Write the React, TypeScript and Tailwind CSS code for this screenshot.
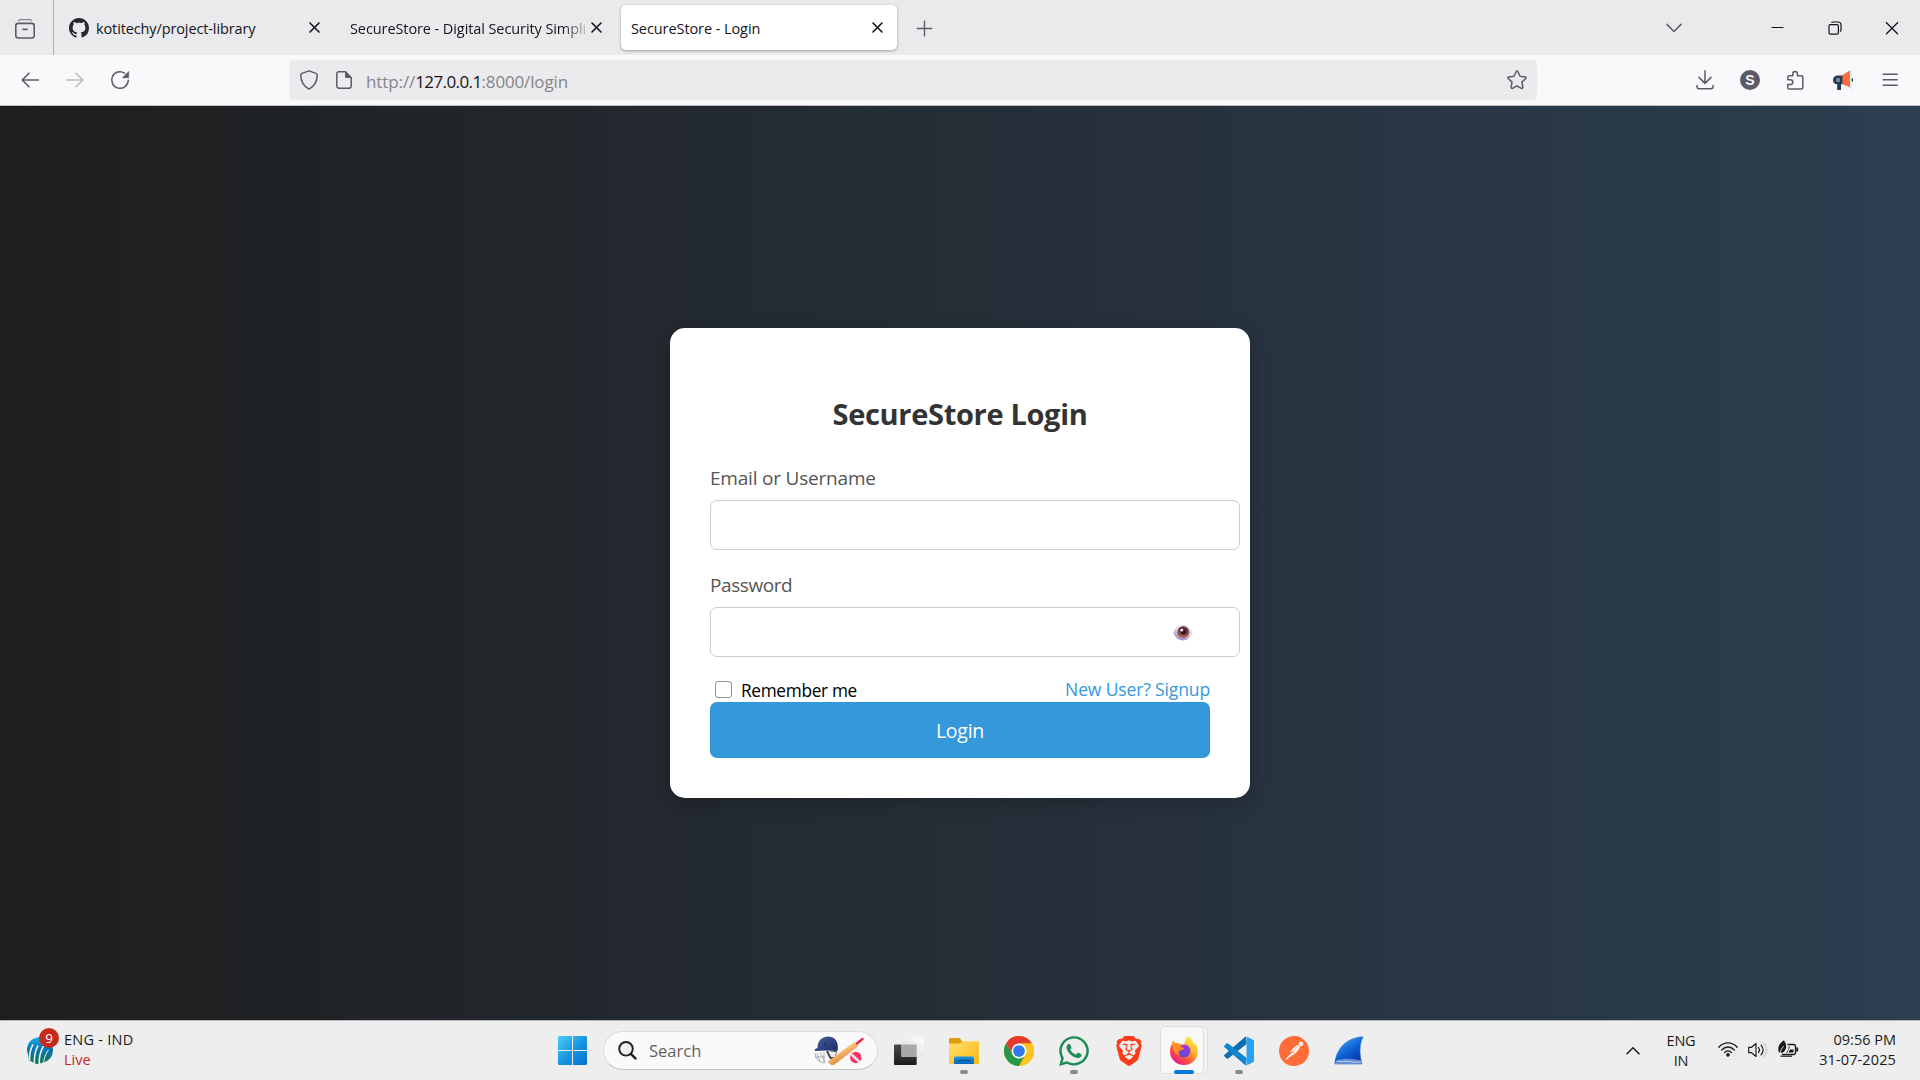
import React, { useState } from "react";
import { FaWhatsapp } from "react-icons/fa";
import { SiBrave, SiPostman } from "react-icons/si";

type LineProps = {
  d: string;
  className?: string;
  size?: number;
  width?: number;
};

/** Stroked glyph on a 20-unit grid, used by the browser toolbar. */
function Line({ d, className = "text-[#5b5b66]", size = 20, width = 1.5 }: LineProps) {
  return (
    <svg
      width={size}
      height={size}
      viewBox="0 0 20 20"
      fill="none"
      stroke="currentColor"
      strokeWidth={width}
      strokeLinecap="round"
      strokeLinejoin="round"
      className={`block shrink-0 ${className}`}
    >
      <path d={d} />
    </svg>
  );
}

function CloseIcon() {
  return <Line d="M5 5l9 9M14 5l-9 9" className="text-[#15141a]" width={1.6} />;
}

function GithubMark() {
  return (
    <svg width="20" height="20" viewBox="0 0 16 16" fill="#24292f" className="block shrink-0">
      <path d="M8 0C3.58 0 0 3.58 0 8c0 3.54 2.29 6.53 5.47 7.59.4.07.55-.17.55-.38 0-.19-.01-.82-.01-1.49-2.01.37-2.53-.49-2.69-.94-.09-.23-.48-.94-.82-1.13-.28-.15-.68-.52-.01-.53.63-.01 1.08.58 1.23.82.72 1.21 1.87.87 2.33.66.07-.52.28-.87.51-1.07-1.78-.2-3.64-.89-3.64-3.95 0-.87.31-1.59.82-2.15-.08-.2-.36-1.02.08-2.12 0 0 .67-.21 2.2.82.64-.18 1.32-.27 2-.27s1.36.09 2 .27c1.53-1.04 2.2-.82 2.2-.82.44 1.1.16 1.92.08 2.12.51.56.82 1.27.82 2.15 0 3.07-1.87 3.75-3.65 3.95.29.25.54.73.54 1.48 0 1.07-.01 1.93-.01 2.2 0 .21.15.46.55.38A8.01 8.01 0 0 0 16 8c0-4.42-3.58-8-8-8z" />
    </svg>
  );
}

function TabStrip() {
  return (
    <div className="flex h-[55px] shrink-0 items-start bg-[#eaeaec] text-[14.5px] text-[#15141a]">
      <div className="flex h-[55px] w-[54px] items-center border-r border-[#adadb2] pl-[15px]">
        <svg width="20" height="20" viewBox="0 0 20 20" fill="none" stroke="#5b5b66" className="mt-[2px] block">
          <path d="M3.4 1.6c.4-.6 1-.9 1.8-.9h9.600c.8 0 1.4.3 1.8.9" strokeWidth="1.2" strokeLinecap="round" stroke="#85858e" />
          <rect x=".8" y="4.4" width="18.4" height="14.6" rx="2.4" strokeWidth="1.6" />
          <path d="M8 10.4h4" strokeWidth="1.6" strokeLinecap="round" />
        </svg>
      </div>
      <div className="flex h-[56px] w-[276px] items-center pl-[15px] pr-[5px]">
        <GithubMark />
        <span className="ml-[7px] mt-[2px] grow whitespace-nowrap tracking-[-0.12px]">kotitechy/project-library</span>
        <CloseIcon />
      </div>
      <div className="flex h-[56px] w-[291px] items-center pl-[20px] pr-[14px]">
        <span className="mt-[2px] w-[237px] shrink-0 whitespace-nowrap tracking-[-0.09px] [mask-image:linear-gradient(to_right,black_212px,transparent_242px)]">
          SecureStore - Digital Security Simpli
        </span>
        <CloseIcon />
      </div>
      <div className="mt-[5px] flex h-[45px] w-[276px] items-center rounded-[5px] bg-white pl-[10px] pr-[9px] shadow-[0_1px_3px_rgba(0,0,0,0.32)]">
        <span className="mt-[2px] grow whitespace-nowrap tracking-[-0.08px]">SecureStore - Login</span>
        <CloseIcon />
      </div>
      <Line d="M10.500 3.300v14.400M3.300 10.500h14.400" className="ml-[17px] mt-[18px] text-[#5b5b66]" width={1.4} />
      <div className="ml-auto flex h-[55px] items-center">
        <Line d="M2.900 6.400l7.100 7.100 7.100-7.100" className="mr-[84px] text-[#5b5b66]" width={1.5} />
        <svg width="20" height="20" viewBox="0 0 20 20" className="mr-[37px] block">
          <path d="M3.500 9.500h12" stroke="#15141a" />
        </svg>
        <svg width="20" height="20" viewBox="0 0 20 20" fill="none" stroke="#15141a" strokeWidth="1.2" className="mr-[37px] block">
          <rect x="4" y="6.600" width="9.400" height="9.600" rx="1.400" />
          <path d="M6.400 4.600c.4-.6.9-.6 1.600-.6h5c1.900 0 3 1 3 3v4.600c0 .8-.1 1.500-.9 2" />
        </svg>
        <svg width="20" height="20" viewBox="0 0 20 20" stroke="#15141a" strokeWidth="1.25" className="mr-[18px] block">
          <path d="M4 4.300l12 12M16 4.300l-12 12" />
        </svg>
      </div>
    </div>
  );
}

function Megaphone() {
  return (
    <svg width="20" height="20" viewBox="0 0 20 20" className="block">
      <path d="M9 5.300L17 .5v17L9 14z" fill="#ff6f3c" />
      <path d="M0 10a4.600 4.600 0 0 1 4.600-4.500H9.400v8.800H8V20H4.200v-5.700A4.500 4.500 0 0 1 0 10z" fill="#1f3b57" />
      <path d="M3.300 8h3.500v4H3.300z" fill="#7d8b99" />
      <path d="M17 0h1.800v20H17z" fill="#d4effb" />
      <path d="M18.700 8.200a1.700 1.700 0 0 1 0 3.600z" fill="#1f3b57" />
    </svg>
  );
}

function NavBar() {
  return (
    <div className="flex h-[51px] shrink-0 items-center border-b border-[#bfbfc3] bg-[#f9f9fb]">
      <Line d="M18.200 10H2.200M9 3.200L2.200 10 9 16.800" className="ml-5 text-[#5b5b66]" size={20} width={1.600} />
      <Line d="M1.800 10h16M11 3.200l6.800 6.800-6.800 6.800" className="ml-[25px] text-[#bcbcc1]" size={20} width={1.600} />
      <svg width="20" height="20" viewBox="0 0 20 20" fill="none" className="ml-[25px] block">
        <path d="M18.300 10.300A8.300 8.300 0 1 1 14.600 3.100" stroke="#5b5b66" strokeWidth="1.500" strokeLinecap="round" />
        <path d="M18.700 1.500v6.300h-6.300z" fill="#5b5b66" stroke="#5b5b66" strokeWidth=".6" strokeLinejoin="round" />
      </svg>
      <div className="ml-[159px] flex h-10 w-[1248px] items-center rounded-[5px] bg-[#ebebed] pl-[10px] pr-[10px]">
        <Line
          d="M10 .9l7 2.500c.7.300 1.200.8 1.200 1.700 0 6.500-1.900 10.800-8.200 14-6.300-3.200-8.200-7.500-8.200-14 0-.9.500-1.400 1.200-1.700z"
          width={1.5}
        />
        <svg width="16" height="18" viewBox="0 0 16 18" fill="none" className="ml-[17px] block">
          <path d="M9.500.8H3A2.200 2.200 0 0 0 .8 3v12A2.200 2.200 0 0 0 3 17.200h10a2.200 2.200 0 0 0 2.200-2.200V6.500z" stroke="#5b5b66" strokeWidth="1.500" strokeLinejoin="round" />
          <path d="M9 .5l6.500 6.500H10.500A1.500 1.500 0 0 1 9 5.500z" fill="#5b5b66" />
        </svg>
        <div className="ml-[14px] mt-[3px] grow whitespace-nowrap text-[17px] text-[#858589]">
          <span className="tracking-[-0.1px]">http://</span>
          <span className="tracking-[-0.6px] text-[#15141a]">127.0.0.1</span>
          <span className="tracking-[-0.15px]">:8000/login</span>
        </div>
        <Line
          d="M9.200 1.500c.3-.7 1.300-.7 1.600 0l2.200 4.700 5.200.7c.8.100 1.100 1 .5 1.600l-3.800 3.600.9 5.200c.2.800-.7 1.400-1.400 1L10 15.800l-4.500 2.500c-.7.400-1.500-.2-1.400-1l.9-5.200L1.200 8.500c-.6-.6-.3-1.500.5-1.600L7 6.200z"
          width={1.5}
        />
      </div>
      <div className="ml-auto flex items-center pr-5">
        <Line d="M10 .8v12.400M4 7.400l6 6 6-6M2 15.600v1.200A1.900 1.900 0 0 0 3.900 18.700h12.200a1.900 1.900 0 0 0 1.900-1.900v-1.200" />
        <div className="ml-[25px] flex size-5 items-center justify-center rounded-full bg-[#5b5b66] font-['Liberation_Sans'] text-[14px] font-bold leading-5 text-[#f9f9fb]">
          S
        </div>
        <Line
          className="ml-[25px] text-[#5b5b66]"
          d="M2.800 9.700V7.200c0-.9.600-1.500 1.500-1.500h3.500V3.800a2.300 2.300 0 0 1 4.600 0v1.900h3.900c.9 0 1.500.6 1.500 1.500v10.300c0 .9-.6 1.500-1.500 1.500H4.300c-.9 0-1.500-.6-1.500-1.500V14.600h2.600a2.400 2.400 0 0 0 0-4.900z"
        />
        <div className="ml-[28px]">
          <Megaphone />
        </div>
        <svg width="20" height="20" viewBox="0 0 20 20" stroke="#5b5b66" strokeWidth="1.500" strokeLinecap="round" className="ml-[27px] block">
          <path d="M3.200 4.200h14M3.200 9.700h14M3.200 15.200h14" />
        </svg>
      </div>
    </div>
  );
}

function EyeIcon() {
  return (
    <svg width="20" height="18" viewBox="0 0 20 18" className="block">
      <defs>
        <linearGradient id="eye-white" x1=".75" y1="0" x2=".25" y2="1">
          <stop offset="0" stopColor="#ececee" />
          <stop offset=".5" stopColor="#d9d4df" />
          <stop offset="1" stopColor="#957cc4" />
        </linearGradient>
        <linearGradient id="eye-iris" x1=".5" y1="0" x2=".5" y2="1">
          <stop offset="0" stopColor="#5e2138" />
          <stop offset="1" stopColor="#b3674f" />
        </linearGradient>
      </defs>
      <path d="M.2 8.600C2 3.300 6 .8 10 .8s8 2.500 9.800 7.800c-2 5.300-5.800 8-9.800 8s-8-2.700-9.800-8z" fill="url(#eye-white)" />
      <circle cx="10.300" cy="8.200" r="5.900" fill="url(#eye-iris)" />
      <circle cx="10.500" cy="8" r="2.800" fill="#30151f" />
      <circle cx="8.800" cy="6.200" r="1.400" fill="#fff" />
    </svg>
  );
}

function LoginCard() {
  const [visible, setVisible] = useState(false);
  return (
    <div className="h-[470px] w-[580px] rounded-[15px] bg-white px-10 pt-[66px] shadow-[0_5px_19px_rgba(0,0,0,0.2)]">
      <h2 className="text-center text-[29px] font-bold leading-10 tracking-[-0.32px] text-[#333]">SecureStore Login</h2>
      <label htmlFor="user" className="mt-8 block text-[19px] leading-6 tracking-[-0.2px] text-[#555]">
        Email or Username
      </label>
      <input id="user" className="mt-[10px] block h-[50px] w-[530px] rounded-[7px] border border-[#ccc] px-4 outline-none" />
      <label htmlFor="pass" className="mt-[23px] block text-[19px] leading-6 tracking-[-0.42px] text-[#555]">
        Password
      </label>
      <div className="relative mt-[10px] w-[530px]">
        <input
          id="pass"
          type={visible ? "text" : "password"}
          className="block h-[50px] w-full rounded-[7px] border border-[#ccc] px-4 outline-none"
        />
        <button
          type="button"
          aria-label="Toggle password"
          onClick={() => setVisible(!visible)}
          className="absolute right-[47px] top-[17px]"
        >
          <EyeIcon />
        </button>
      </div>
      <div className="mt-[21px] flex h-6 items-center justify-between">
        <label className="flex items-start">
          <input
            type="checkbox"
            className="ml-[5px] mt-[3px] size-[17px] appearance-none rounded-[3px] border border-[#8f8f9d] bg-white"
          />
          <span className="ml-[9px] mt-[1px] text-[17.25px] leading-6 tracking-[-0.31px] text-black">Remember me</span>
        </label>
        <a className="-mt-[2px] text-[17.5px] leading-6 tracking-[-0.13px] text-[#3498db]">New User? Signup</a>
      </div>
      <button type="button" className="flex h-14 w-full items-center justify-center rounded-[7px] bg-[#3498db] pt-[2px] text-[19.5px] tracking-[-0.25px] text-white">
        Login
      </button>
    </div>
  );
}

function CricketWidget() {
  return (
    <div className="flex w-[160px] items-center">
      <div className="relative ml-[26px] mt-[-1px]">
        <svg width="28" height="30" viewBox="0 0 28 30" className="block">
          <defs>
            <linearGradient id="icc" x1="0" y1="0" x2="0" y2="1">
              <stop offset="0" stopColor="#16b3e6" />
              <stop offset=".45" stopColor="#0873b4" />
              <stop offset="1" stopColor="#0f7a45" />
            </linearGradient>
          </defs>
          <path
            d="M1 15C1 7 7 2 15 2c7 0 12 5 12 13 0 6-4 11-8.500 12l-2 .5-4.500 1.800-4-1.300L3 25z"
            fill="url(#icc)"
          />
          <path d="M7 9.500C4.500 14 3.300 19 3.600 25M12 10.500C9 16 8.200 21 8.300 28M17.500 11C14 17 13 22 13.200 29" fill="none" stroke="#ededed" strokeWidth="1.600" />
          <path d="M22.500 15c-3 4-4.500 8-4.800 12.500" fill="none" stroke="#ededed" />
          <path d="M-1 21l4 6 2 3h-6z" fill="#ededed" />
        </svg>
        <span className="absolute left-[13px] top-[-7px] flex size-5 items-center justify-center rounded-full bg-[#c42b1c] text-[13.5px] leading-5 text-white">
          9
        </span>
      </div>
      <div className="-mt-[2px] ml-[10px] text-[14.5px] leading-5 text-[#1b1b1b]">
        <div className="whitespace-nowrap tracking-[0.25px]">ENG - IND</div>
        <div className="text-[#c42b1c]">Live</div>
      </div>
    </div>
  );
}

function WindowsLogo() {
  return (
    <svg width="29" height="29" viewBox="0 0 29 29" className="block">
      <defs>
        <linearGradient id="win" gradientUnits="userSpaceOnUse" x1="0" y1="0" x2="29" y2="29">
          <stop offset="0" stopColor="#4cd0fb" />
          <stop offset=".5" stopColor="#1796e2" />
          <stop offset="1" stopColor="#0670cd" />
        </linearGradient>
      </defs>
      <path d="M1 0h13v14H0V1zM15 0h13l1 1v13H15zM0 15h14v14H1l-1-1zM15 15h14v13l-1 1H15z" fill="url(#win)" />
    </svg>
  );
}

function CricketArt() {
  return (
    <svg width="50" height="30" viewBox="0 0 50 30" className="block">
      <defs>
        <linearGradient id="helmet" x1="0" y1="0" x2="1" y2="1">
          <stop offset="0" stopColor="#48619f" />
          <stop offset="1" stopColor="#1b2c68" />
        </linearGradient>
        <linearGradient id="bat" gradientUnits="userSpaceOnUse" x1="26" y1="12" x2="31" y2="22">
          <stop offset="0" stopColor="#ffd08c" />
          <stop offset="1" stopColor="#e59343" />
        </linearGradient>
      </defs>
      <path d="M1 17c0 5 3 9 10 10M1 21h10M3 17l3 9M6 16l5 10M10 16v11M13 16l2 5 5 1 3-6M14 27l4-5" fill="none" stroke="#a9adb2" strokeWidth="1" />
      <path d="M12 15l4 8 5-1 2-8z" fill="#3a3d49" />
      <path d="M14 15l3 6h4l1-5z" fill="#eee" />
      <path d="M3.500 12C3.500 4 9 .5 14 .5c6 0 9.800 4 9.800 10v4H13l-12 .5c-.800-1 .200-2.500 2.500-3z" fill="url(#helmet)" />
      <path d="M11.500 6c-.600 1.500-.300 3 .3 4" fill="none" stroke="#13204e" />
      <path d="M38.500 7.500l2.500-1.700 3.500 4L42 12 20.500 28.500c-2 1.300-4 .200-5.500-1.500-.800-1-.700-1.800 0-2.400z" fill="url(#bat)" />
      <path d="M43 7.500l5.500-4.500" stroke="#e12a4a" strokeWidth="2.400" strokeLinecap="round" />
      <circle cx="41.800" cy="21.500" r="5.700" fill="#f2355f" />
      <path d="M37.500 18.500l8 7.500" stroke="#f7d9f0" strokeWidth="2.600" />
    </svg>
  );
}

function TaskViewIcon() {
  return (
    <svg width="30" height="28" viewBox="0 0 30 28" className="block">
      <defs>
        <linearGradient id="tv-dark" x1="0" y1="0" x2="0" y2="1">
          <stop offset="0" stopColor="#4b4b4b" />
          <stop offset="1" stopColor="#1d1d1d" />
        </linearGradient>
        <linearGradient id="tv-light" x1="1" y1="0" x2="0" y2="1">
          <stop offset="0" stopColor="#fdfdfd" />
          <stop offset="1" stopColor="#dadada" />
        </linearGradient>
      </defs>
      <rect x="0" y="7.500" width="22.700" height="20.500" rx="1" fill="url(#tv-dark)" />
      <rect x="7.500" y="0" width="22.300" height="20" rx="1" fill="url(#tv-light)" />
      <rect x="7.500" y="7.500" width="15.200" height="12.500" fill="#a9a9a9" />
    </svg>
  );
}

function ExplorerIcon() {
  return (
    <svg width="30" height="26" viewBox="0 0 30 26" className="block">
      <defs>
        <linearGradient id="folder" x1="0" y1="0" x2="1" y2="1">
          <stop offset="0" stopColor="#ffdf70" />
          <stop offset="1" stopColor="#fbb813" />
        </linearGradient>
        <linearGradient id="folder-base" x1="0" y1="0" x2="0" y2="1">
          <stop offset="0" stopColor="#1a97dd" />
          <stop offset="1" stopColor="#0666b8" />
        </linearGradient>
      </defs>
      <path d="M0 1.500C0 .6.600 0 1.500 0h8c.7 0 1.200.200 1.700.800L13.500 4v5H0z" fill="#dc9c08" />
      <path d="M0 5.500h10.500L14 3.200h15c.6 0 1 .4 1 1V26H0z" fill="url(#folder)" />
      <path d="M5 26v-5.500c0-1.200.8-2 2-2h16c1.200 0 2 .8 2 2V26z" fill="url(#folder-base)" />
      <path d="M8.500 22.500h13" stroke="#0a4f93" strokeWidth="1.200" />
    </svg>
  );
}

function ChromeIcon() {
  return (
    <svg width="30" height="30" viewBox="0 0 48 48" className="block">
      <circle cx="24" cy="24" r="24" fill="#fbc116" />
      <path d="M24 0a24 24 0 0 1 20.800 12H24L13.600 30 3.200 12A24 24 0 0 1 24 0z" fill="#e33b2e" />
      <path d="M3.200 12l10.400 18L24 36l10.400-6L24 48A24 24 0 0 1 3.200 12z" fill="#279847" />
      <path d="M24 12h20.800A24 24 0 0 1 24 48l10.400-18z" fill="#fcc31e" />
      <circle cx="24" cy="24" r="12" fill="#fff" />
      <circle cx="24" cy="24" r="9.400" fill="#3478ee" />
    </svg>
  );
}

function FirefoxIcon() {
  return (
    <svg width="28" height="30" viewBox="0 0 28 30" className="block">
      <defs>
        <linearGradient id="fx-body" x1=".85" y1=".1" x2=".2" y2=".95">
          <stop offset="0" stopColor="#fff14d" />
          <stop offset=".35" stopColor="#ffb02c" />
          <stop offset=".65" stopColor="#ff5b36" />
          <stop offset="1" stopColor="#e8128c" />
        </linearGradient>
        <linearGradient id="fx-globe" x1=".7" y1="0" x2=".3" y2="1">
          <stop offset="0" stopColor="#a233e0" />
          <stop offset="1" stopColor="#5a4fd8" />
        </linearGradient>
        <linearGradient id="fx-fox" x1="0" y1="0" x2="1" y2="1">
          <stop offset="0" stopColor="#ffa22b" />
          <stop offset="1" stopColor="#ff7a1c" />
        </linearGradient>
      </defs>
      <path
        d="M18.500 0c2.200 1.800 4 4.300 4.600 6.300.9.400 1.600 1 2 1.600l.3-1C27 9.500 28 12.500 28 15.500 28 23 21.800 29 14 29S0 23 0 15.500c0-3.300.8-6 2.300-8l.7-2.800L5.300 7.300 9 7.500 14 10c.3-4 1.600-7.500 4.500-10z"
        fill="url(#fx-body)"
      />
      <circle cx="14" cy="15" r="6.400" fill="url(#fx-globe)" />
      <path
        d="M2.300 7.500L3 4.700l2.500 2.700c1.500-.3 3-.1 4.300.7l2.900.2c-.7 1.500-1.700 2.400-2.500 2.800l3.500.6c.6.200.5 1-.1 1.500-1.300 1-2.300 1.100-3.600 1.200-1.700.8-2 3-.5 5C6 19 3.500 16 2.300 7.500z"
        fill="url(#fx-fox)"
      />
    </svg>
  );
}

function VscodeIcon() {
  return (
    <svg width="30" height="30" viewBox="0 0 30 30" className="block">
      <path d="M21.800.2L22.600 8 4.200 22.400c-.5.400-1.100.4-1.600 0L.5 20.500c-.6-.5-.6-1.300 0-1.800z" fill="#0a6fb5" />
      <path d="M21.800 29.800L22.600 22 4.200 7.600c-.5-.4-1.100-.4-1.600 0L.5 9.500c-.6.5-.6 1.300 0 1.800z" fill="#1086cf" />
      <path d="M21.800 29.800c-.5.100-1 0-1.300-.4.700.7 2 .2 2-.9V1.500c0-1.100-1.300-1.600-2-.9.300-.4.800-.5 1.300-.4L29 3.700c.6.300 1 .9 1 1.500v19.600c0 .6-.4 1.200-1 1.500z" fill="#26a3f0" />
    </svg>
  );
}

function WiresharkIcon() {
  return (
    <svg width="30" height="29" viewBox="0 0 30 29" className="block">
      <defs>
        <linearGradient id="fin" x1=".2" y1=".1" x2=".8" y2="1">
          <stop offset="0" stopColor="#3f9bf5" />
          <stop offset=".5" stopColor="#0b5fd6" />
          <stop offset="1" stopColor="#072f98" />
        </linearGradient>
      </defs>
      <path d="M.8 28C2 14 11 2 29 .8 25.500 8 25 17 28 28z" fill="url(#fin)" stroke="#2b6fce" strokeWidth=".6" />
      <path d="M2 24.500c7-2.300 17-2.300 25 0l1 3.500H.8z" fill="#7fa6dd" opacity=".75" />
      <path d="M3 25c5 1.500 8-.5 12 .5s8 .5 12 .5" stroke="#d5e3f5" fill="none" strokeWidth=".8" />
    </svg>
  );
}

function BatteryIcon() {
  return (
    <svg width="21" height="18" viewBox="0 0 21 18" className="block">
      <path d="M9.500 4.500h6c1.100 0 2 .9 2 2v6c0 1.100-.9 2-2 2H4" fill="none" stroke="#1b1b1b" strokeWidth="1.300" />
      <path d="M8 12.600c2-1.600 2.800-3.600 2.600-6.100H12L9.500 12.600zM10.500 12.600L12 9.500h3.500v3.100z" fill="#1b1b1b" />
      <path d="M.8 12.500C-.6 7.500 1 3.500 5.800.3c2.600 3.200 3.600 7.200.6 10.900-1.100 1.300-2.700 1.800-4 1.300z" fill="#1b1b1b" />
      <path d="M1.300 15.500C2 11.500 3.500 8.500 5.600 6" fill="none" stroke="#eee" strokeWidth=".9" />
      <path d="M2.500 16.200H14" stroke="#1b1b1b" strokeWidth="1.200" />
      <path d="M18.300 7.300h.5c.8 0 1.300.6 1.300 1.300v1.800c0 .7-.5 1.300-1.300 1.300h-.5z" fill="#1b1b1b" />
    </svg>
  );
}

type SlotProps = { children: React.ReactNode; state?: "idle" | "running" | "active" };

function Slot({ children, state = "idle" }: SlotProps) {
  return (
    <div className="relative flex h-[59px] w-[55px] items-center justify-center">
      {state === "active" && (
        <>
          <div className="absolute left-[15px] top-[5px] h-[48px] w-[37px] rounded-[5px] border border-[#e0e0e0] bg-[#f3f3f3]" />
          <div className="absolute left-[4px] top-[5px] h-[48px] w-[44px] rounded-[5px] border border-[#dfdfdf] bg-[#f8f8f8]" />
          <div className="absolute left-[18px] top-[49px] h-1 w-5 rounded-full bg-[#0078d4]" />
        </>
      )}
      {state === "running" && <div className="absolute left-[24px] top-[49px] h-1 w-2 rounded-full bg-[#8a8a8a]" />}
      <div className="relative">{children}</div>
    </div>
  );
}

function Taskbar() {
  return (
    <div className="flex h-[60px] shrink-0 items-center border-t border-[#b4b4b6] bg-[#eeeeee]">
      <CricketWidget />
      <div className="ml-[398px]">
        <WindowsLogo />
      </div>
      <div className="ml-[16px] flex h-[39px] w-[275px] items-center rounded-full border border-b-[#c4c4c4] border-x-[#dcdcdc] border-t-[#dcdcdc] bg-[#fafafa] pl-[14px] pr-[13px]">
        <svg width="19" height="19" viewBox="0 0 19 19" fill="none" stroke="#1f1f1f" strokeWidth="1.900" strokeLinecap="round" className="block">
          <circle cx="8" cy="7.800" r="6.800" fill="#f1f1f1" />
          <path d="M12.800 12.800l4.700 4.600" strokeWidth="2.400" />
        </svg>
        <span className="ml-[12px] mt-[2px] grow text-[16.5px] text-[#5f5f5f]">Search</span>
        <CricketArt />
      </div>
      <div className="ml-[3px] flex">
        <Slot><TaskViewIcon /></Slot>
        <Slot state="running"><ExplorerIcon /></Slot>
        <Slot><ChromeIcon /></Slot>
        <Slot state="running"><FaWhatsapp className="block size-[34px] text-[#1d8b56]" /></Slot>
        <Slot>
          <SiBrave className="block size-[30px] text-[#fb3d1c]" />
        </Slot>
        <Slot state="active"><FirefoxIcon /></Slot>
        <Slot state="running"><VscodeIcon /></Slot>
        <Slot>
          <div className="rounded-full bg-white">
            <SiPostman className="block size-[30px] text-[#ff6c37]" />
          </div>
        </Slot>
        <Slot><WiresharkIcon /></Slot>
      </div>
      <div className="ml-auto flex items-center pr-6 text-[14.5px] leading-5 text-[#1b1b1b]">
        <svg width="14" height="9" viewBox="0 0 14 9" fill="none" stroke="#1b1b1b" strokeWidth="1.500" strokeLinecap="round" strokeLinejoin="round" className="block">
          <path d="M1 7.800l6-6 6 6" />
        </svg>
        <div className="ml-[26px] w-[30px] text-center tracking-[-0.2px]">
          <div>ENG</div>
          <div>IN</div>
        </div>
        <svg width="20" height="16" viewBox="0 0 20 16" fill="none" stroke="#1b1b1b" strokeWidth="1.300" strokeLinecap="round" className="-mt-[3px] ml-[22px] block">
          <path d="M.8 6.200C6 .4 14 .4 19.200 6.200M3.700 9c3.600-4 9-4 12.600 0M6.500 11.600c2-2.300 5-2.300 7 0" />
          <circle cx="10" cy="13.800" r="1.200" fill="#1b1b1b" />
        </svg>
        <svg width="20" height="18" viewBox="0 0 20 18" fill="none" stroke="#1b1b1b" strokeWidth="1.200" strokeLinecap="round" strokeLinejoin="round" className="-mt-[2px] ml-[10px] block">
          <path d="M.7 6.300h2.800L8 2.500v13l-4.500-3.800H.7z" />
          <path d="M10.500 6.500c1.200 1.500 1.200 3.500 0 5M13 4.200c2.600 2.900 2.600 6.700 0 9.600" />
          <path d="M15.700 2c4 4.200 4 9.800 0 14" stroke="#c6c6c6" />
        </svg>
        <div className="-mt-[3px] ml-[10px]">
          <BatteryIcon />
        </div>
        <div className="-mt-[2px] w-[97px] whitespace-nowrap text-right">
          <div>09:56 PM</div>
          <div className="tracking-[0.12px]">31-07-2025</div>
        </div>
      </div>
    </div>
  );
}

export default function App() {
  return (
    <div className="flex h-[1080px] w-[1920px] flex-col overflow-hidden font-['Open_Sans','Noto_Sans',sans-serif]">
      <TabStrip />
      <NavBar />
      <main className="flex grow items-start justify-center bg-[linear-gradient(to_right,#1e1e1e,#2c3e50)] pt-[222px]">
        <LoginCard />
      </main>
      <Taskbar />
    </div>
  );
}
